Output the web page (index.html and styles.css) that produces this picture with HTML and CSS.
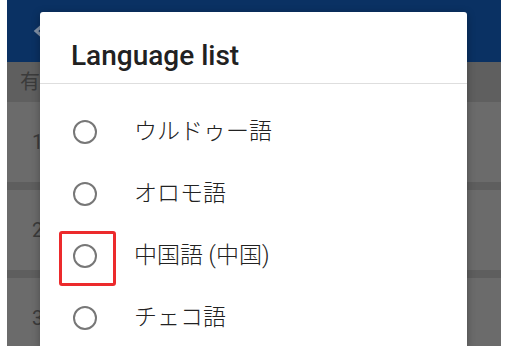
FILE: index.html
```html
<!DOCTYPE html>
<html lang="ja">
<head>
    <meta charset="UTF-8">
    <title>Language list</title>
    <link rel="stylesheet" href="styles.css">
</head>
<body>
    <div class="screen">
        <div class="app">
            <header class="app-bar">
                <svg class="back" width="18" height="18" viewBox="0 0 18 18">
                    <path d="M12 2 L4 9 L12 16" fill="none" stroke="#8090a6" stroke-width="3"/>
                </svg>
            </header>
            <div class="list-head">有</div>
            <div class="list">
                <div class="row"><span class="num">1</span></div>
                <div class="row"><span class="num">2</span></div>
                <div class="row"><span class="num">3</span></div>
            </div>
        </div>

        <div class="dialog">
            <h2 class="dialog-title">Language list</h2>
            <ul class="options">
                <li class="option"><span class="radio"></span><span class="label">ウルドゥー語</span></li>
                <li class="option"><span class="radio"></span><span class="label">オロモ語</span></li>
                <li class="option"><span class="radio marked"></span><span class="label">中国語 (中国)</span></li>
                <li class="option"><span class="radio"></span><span class="label">チェコ語</span></li>
            </ul>
        </div>
    </div>
</body>
</html>
```

FILE: styles.css
```css
html, body {
    margin: 0;
    height: 100%;
    overflow: hidden;
    background-color: #ffffff;
    font-family: Roboto, "Noto Sans CJK JP", sans-serif;
}

.screen {
    position: relative;
    margin-left: 7px;
    width: 494px;
    height: 346px;
    overflow: hidden;
}

.app {
    display: flex;
    flex-direction: column;
    height: 100%;
    background-color: #6b6b6b;
}

.app-bar {
    height: 62px;
    flex-shrink: 0;
    background-color: #0a3163;
    display: flex;
    align-items: center;
    padding-left: 25px;
}

.back {
    display: block;
}

.list-head {
    height: 40px;
    flex-shrink: 0;
    background-color: #5f5f5f;
    color: #3b3b3b;
    font-size: 20px;
    line-height: 40px;
    padding-left: 13px;
}

.list {
    display: flex;
    flex-direction: column;
    gap: 8px;
    background-color: #5e5e5e;
}

.row {
    height: 80px;
    background-color: #6b6b6b;
    display: flex;
    align-items: center;
    padding-left: 25px;
}

.num {
    color: #3b3b3b;
    font-size: 20px;
}

.dialog {
    position: absolute;
    left: 33px;
    top: 12px;
    bottom: 0;
    width: 427px;
    background-color: #ffffff;
    border-radius: 3px 3px 0 0;
    box-shadow: 0 2px 8px rgba(0, 0, 0, 0.3);
    overflow: hidden;
}

.dialog-title {
    margin: 0;
    padding: 28px 31px 11px;
    font-size: 28px;
    font-weight: 500;
    line-height: 32px;
    color: #212121;
    border-bottom: 1px solid #dedede;
}

.options {
    list-style: none;
    margin: 0;
    padding: 17px 0 0;
}

.option {
    display: flex;
    align-items: center;
    height: 62px;
    padding-left: 33px;
}

.radio {
    position: relative;
    width: 24px;
    height: 24px;
    box-sizing: border-box;
    border: 2.5px solid #777777;
    border-radius: 50%;
    margin-right: 37px;
    flex-shrink: 0;
}

.marked::after {
    content: "";
    position: absolute;
    left: -16px;
    top: -15px;
    width: 57px;
    height: 55px;
    box-sizing: border-box;
    border: 3.5px solid #ec2a2c;
    border-radius: 3px;
}

.label {
    font-size: 23px;
    font-weight: 300;
    color: #222222;
    line-height: 30px;
}
```
